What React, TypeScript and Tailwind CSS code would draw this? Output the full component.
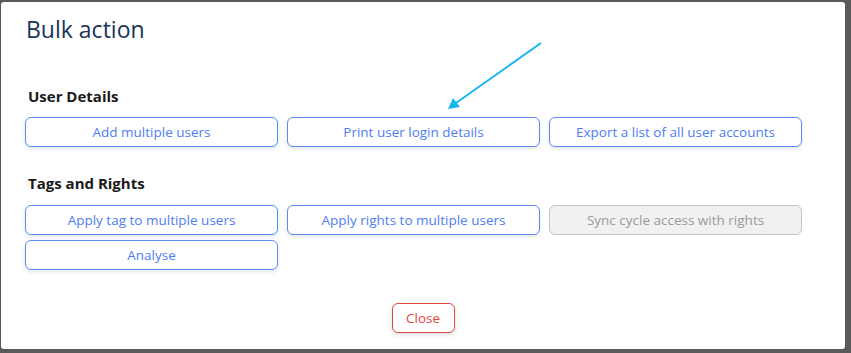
import React from "react"

const btn =
    "h-[30px] rounded-md border border-[#5b8cf0] bg-white text-[13.5px] font-medium text-[#4f7df2] shadow-[0_2px_4px_rgba(40,50,90,0.12)]"

function App() {
    return (
        <div className="relative w-[851px] h-[353px] bg-[#5a5a5a] overflow-hidden" style={{ fontFamily: "'Open Sans', 'Noto Sans', sans-serif" }}>
            <div className="ml-[1px] mt-[2px] w-[844px] h-[347px] bg-white rounded-[3px] px-6 pt-[11px] flex flex-col">
                <h1 className="text-[23px] leading-[32px] text-[#1c3458] ml-[1px]">Bulk action</h1>

                <h2 className="mt-[41px] mb-[11px] ml-[3px] text-[15px] leading-5 font-bold text-[#1a1a1a]">User Details</h2>
                <div className="grid grid-cols-3 w-[777px] gap-x-[9px] gap-y-[5px]">
                    <button className={btn}>Add multiple users</button>
                    <button className={btn}>Print user login details</button>
                    <button className={btn}>Export a list of all user accounts</button>
                </div>

                <h2 className="mt-[26px] mb-3 ml-[3px] text-[15px] leading-5 font-bold text-[#1a1a1a]">Tags and Rights</h2>
                <div className="grid grid-cols-3 w-[777px] gap-x-[9px] gap-y-[5px]">
                    <button className={btn}>Apply tag to multiple users</button>
                    <button className={btn}>Apply rights to multiple users</button>
                    <button className="h-[30px] rounded-md border border-[#c4c4c4] bg-[#f1f1f1] text-[13.5px] font-medium text-[#9a9a9a]">
                        Sync cycle access with rights
                    </button>
                    <button className={btn}>Analyse</button>
                </div>

                <div className="flex justify-center mt-[33px]">
                    <button className="h-[30px] w-[63px] rounded-md border border-[#e2463c] bg-white text-[13.5px] font-medium text-[#e2463c] shadow-[0_2px_4px_rgba(40,50,90,0.15)]">
                        Close
                    </button>
                </div>
            </div>

            {/* annotation arrow */}
            <svg className="absolute left-0 top-0 pointer-events-none" width="851" height="353">
                <line x1="541" y1="43" x2="456" y2="103" stroke="#17b6ee" strokeWidth="2" />
                <polygon points="448,109 453,98 460,107" fill="#17b6ee" />
            </svg>
        </div>
    )
}

export default App
